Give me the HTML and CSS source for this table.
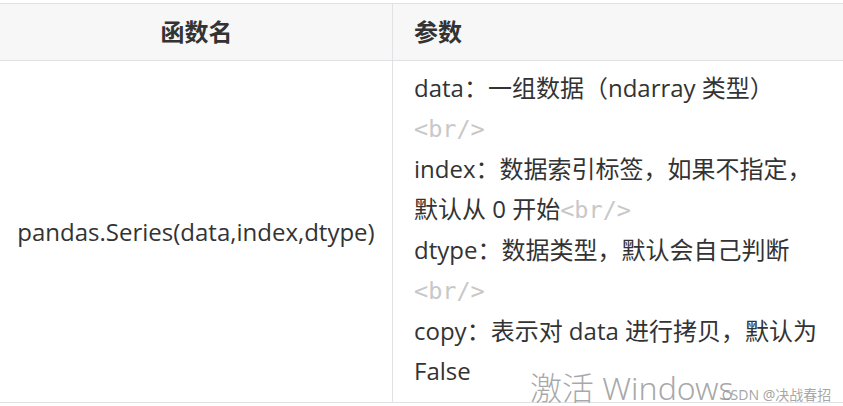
FILE: index.html
```html
<!DOCTYPE html>
<html lang="zh-CN">
<head>
<meta charset="utf-8">
<title>pandas.Series</title>
<link rel="stylesheet" href="styles.css">
</head>
<body>
<table class="tbl">
  <thead>
    <tr>
      <th class="c-name">函数名</th>
      <th class="c-param">参数</th>
    </tr>
  </thead>
  <tbody>
    <tr>
      <td class="c-name">pandas.Series(data,index,dtype)</td>
      <td class="c-param">data：一组数据（ndarray 类型）<br><span class="tag">&lt;br/&gt;</span><br>index：数据索引标签，如果不指定，<br>默认从 0 开始<span class="tag">&lt;br/&gt;</span><br>dtype：数据类型，默认会自己判断<br><span class="tag">&lt;br/&gt;</span><br>copy：表示对 data 进行拷贝，默认为<br>False</td>
    </tr>
  </tbody>
</table>
<div class="wm">
  <span class="wm-main">激活 Windows</span>
  <span class="wm-csdn">CSDN @决战春招</span>
</div>
</body>
</html>
```
FILE: styles.css
```css
html, body {
  margin: 0;
  padding: 0;
  background: #ffffff;
  overflow: hidden;
}
body {
  width: 843px;
  height: 406px;
  position: relative;
  font-family: "Open Sans", "Noto Sans CJK SC", sans-serif;
  font-size: 24px;
  color: #333333;
}
.tbl {
  border-collapse: collapse;
  margin: 3px 0 0 -1px;
  width: 880px;
  table-layout: fixed;
}
.tbl th, .tbl td {
  border: 1px solid #dfe1e4;
  padding: 8px 20px 8px 21px;
  line-height: 40px;
}
.tbl th {
  background: #f7f7f7;
  font-weight: bold;
  text-align: left;
  color: #333333;
}
.tbl th.c-name {
  width: 351px;
  text-align: center;
}
.tbl td.c-name {
  text-align: center;
  vertical-align: middle;
  padding-left: 0;
  padding-right: 0;
  white-space: nowrap;
}
.tbl td.c-param {
  padding-top: 7px;
  padding-bottom: 11px;
  white-space: nowrap;
}
.tag {
  font-family: "DejaVu Sans Mono", monospace;
  font-size: 23.5px;
  color: #c8c8c8;
}
.wm {
  position: absolute;
  left: 530px;
  top: 368px;
  display: flex;
  align-items: baseline;
  white-space: nowrap;
}
.wm-main {
  font-family: "Noto Sans", "Noto Sans CJK SC", sans-serif;
  font-weight: 300;
  font-size: 32px;
  line-height: 40px;
  color: rgba(140, 140, 140, 0.75);
}
.wm-csdn {
  font-family: "Noto Sans", "Noto Sans CJK SC", sans-serif;
  font-size: 14px;
  color: rgba(150, 150, 150, 0.85);
  margin-left: -12px;
}
```
